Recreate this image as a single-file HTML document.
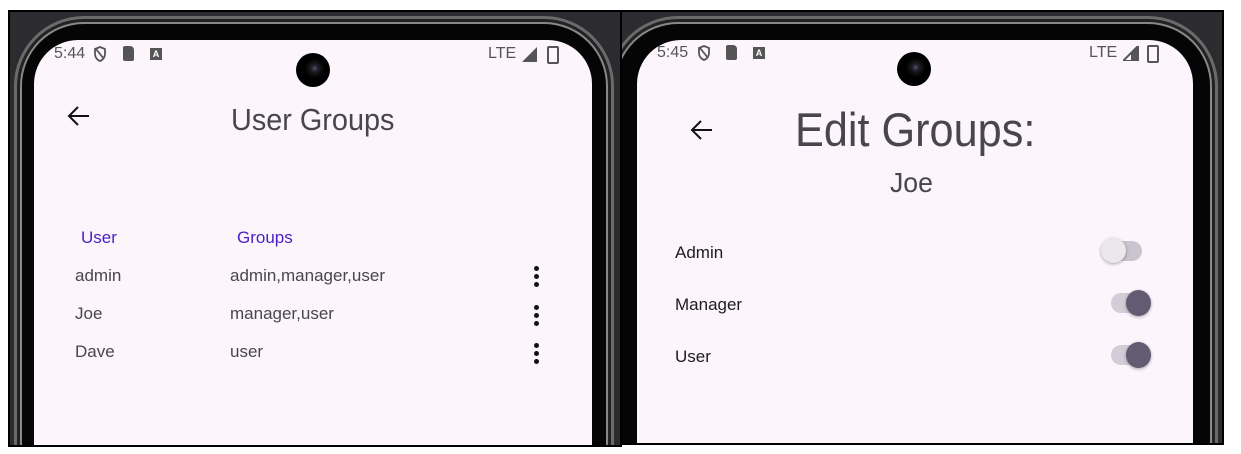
<!DOCTYPE html>
<html><head><style>
body{margin:0;width:1241px;height:454px;background:#fff;position:relative;overflow:hidden;font-family:"Liberation Sans",sans-serif}
.abs{position:absolute}
.frame{position:absolute;background:#2b2b30;border:2px solid #000;overflow:hidden}
.phone{position:absolute;background:#050505;border-radius:70px 70px 0 0;box-shadow:inset 0 0 0 3px #6a6a6a,inset 0 0 0 6px #222,inset 0 0 0 8px #888}
.screen{position:absolute;background:#fcf6fc;border-radius:44px 44px 0 0}
.t{position:absolute;white-space:nowrap;color:#49454f}
.cam{position:absolute;width:34px;height:34px;border-radius:50%;background:radial-gradient(circle at 55% 45%,#556 0,#223 3px,#111 6px,#000 10px)}
.dots{position:absolute;width:5px}
.dots i{display:block;width:5px;height:5px;border-radius:50%;background:#111;margin-bottom:3px}
.track{position:absolute;height:20px;border-radius:10px;background:#cbc4ce}
.thumb{position:absolute;border-radius:50%;box-shadow:0 1px 3px rgba(0,0,0,.35)}
</style></head><body>
<!-- LEFT -->
<div class="frame" style="left:8px;top:10px;width:610px;height:433px">
  <div class="phone" style="left:4px;top:4px;width:600px;height:440px"></div>
  <div class="screen" style="left:24px;top:28px;width:558px;height:410px"></div>
</div>
<div class="t" style="left:54px;top:45px;font-size:16px;color:#555">5:44</div>
<svg class="abs" style="left:93px;top:46px" width="14" height="16" viewBox="0 0 14 16"><path d="M7 1L2 3v5c0 3 2 6 5 7 3-1 5-4 5-7V3z M3 3l8 10" fill="none" stroke="#555" stroke-width="1.8"/></svg>
<div class="abs" style="left:123px;top:46px;width:11px;height:15px;background:#555;border-radius:2px 4px 2px 2px"></div>
<div class="abs" style="left:150px;top:48px;width:12px;height:12px;background:#555;color:#fff;font-size:9px;text-align:center;line-height:12px;font-weight:bold">A</div>
<div class="t" style="left:488px;top:45px;font-size:16px;color:#555">LTE</div>
<svg class="abs" style="left:522px;top:47px" width="16" height="15"><path d="M15 0V15H0z" fill="#555"/></svg>
<div class="abs" style="left:547px;top:46px;width:8px;height:14px;border:2px solid #555;border-radius:2px"></div>
<div class="cam" style="left:296px;top:53px"></div>
<svg class="abs" style="left:67px;top:105px" width="24" height="22" viewBox="0 0 24 22"><path d="M22 11H3M11 2L2 11l9 9" fill="none" stroke="#111" stroke-width="2"/></svg>
<div class="t" style="left:231px;top:102px;font-size:31px;transform:scaleX(0.93);transform-origin:0 0">User Groups</div>
<div class="t" style="left:81px;top:228px;font-size:17px;color:#4a1ec4">User</div>
<div class="t" style="left:237px;top:228px;font-size:17px;color:#4a1ec4">Groups</div>
<div class="t" style="left:75px;top:266px;font-size:17px">admin</div>
<div class="t" style="left:230px;top:266px;font-size:17px">admin,manager,user</div>
<div class="t" style="left:75px;top:304px;font-size:17px">Joe</div>
<div class="t" style="left:230px;top:304px;font-size:17px">manager,user</div>
<div class="t" style="left:75px;top:342px;font-size:17px">Dave</div>
<div class="t" style="left:230px;top:342px;font-size:17px">user</div>
<div class="dots" style="left:534px;top:266px"><i></i><i></i><i></i></div>
<div class="dots" style="left:534px;top:305px"><i></i><i></i><i></i></div>
<div class="dots" style="left:534px;top:343px"><i></i><i></i><i></i></div>
<!-- RIGHT -->
<div class="frame" style="left:620px;top:10px;width:600px;height:431px">
  <div class="phone" style="left:-14px;top:4px;width:610px;height:440px"></div>
  <div class="screen" style="left:15px;top:28px;width:556px;height:410px"></div>
</div>
<div class="t" style="left:657px;top:44px;font-size:16px;color:#555">5:45</div>
<svg class="abs" style="left:697px;top:45px" width="14" height="16" viewBox="0 0 14 16"><path d="M7 1L2 3v5c0 3 2 6 5 7 3-1 5-4 5-7V3z M3 3l8 10" fill="none" stroke="#555" stroke-width="1.8"/></svg>
<div class="abs" style="left:726px;top:45px;width:11px;height:15px;background:#555;border-radius:2px 4px 2px 2px"></div>
<div class="abs" style="left:753px;top:47px;width:12px;height:12px;background:#555;color:#fff;font-size:9px;text-align:center;line-height:12px;font-weight:bold">A</div>
<div class="t" style="left:1089px;top:44px;font-size:16px;color:#555">LTE</div>
<svg class="abs" style="left:1123px;top:46px" width="16" height="15"><path d="M15 0V15H0z" fill="none" stroke="#555" stroke-width="2"/><path d="M15 0V15H8V7z" fill="#555"/></svg>
<div class="abs" style="left:1147px;top:45px;width:8px;height:14px;border:2px solid #555;border-radius:2px"></div>
<div class="cam" style="left:897px;top:52px"></div>
<svg class="abs" style="left:690px;top:119px" width="24" height="22" viewBox="0 0 24 22"><path d="M22 11H3M11 2L2 11l9 9" fill="none" stroke="#111" stroke-width="2"/></svg>
<div class="t" style="left:795px;top:102px;font-size:47px;transform:scaleX(0.92);transform-origin:0 0">Edit Groups:</div>
<div class="t" style="left:890px;top:167px;font-size:28px;transform:scaleX(0.95);transform-origin:0 0">Joe</div>
<div class="t" style="left:675px;top:243px;font-size:17px;color:#1d1b20">Admin</div>
<div class="t" style="left:675px;top:295px;font-size:17px;color:#1d1b20">Manager</div>
<div class="t" style="left:675px;top:347px;font-size:17px;color:#1d1b20">User</div>
<div class="track" style="left:1104px;top:241px;width:38px"></div>
<div class="thumb" style="left:1101px;top:238px;width:25px;height:25px;background:#ebe8ec"></div>
<div class="track" style="left:1111px;top:293px;width:38px;background:#d3cdd7"></div>
<div class="thumb" style="left:1126px;top:290px;width:25px;height:26px;background:#625b71"></div>
<div class="track" style="left:1111px;top:345px;width:38px;background:#d3cdd7"></div>
<div class="thumb" style="left:1126px;top:342px;width:25px;height:26px;background:#625b71"></div>
</body></html>
